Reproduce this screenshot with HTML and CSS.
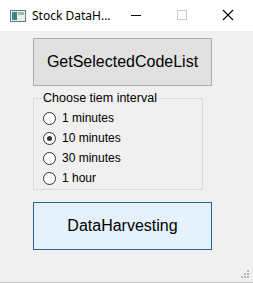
FILE: index.html
```html
<!DOCTYPE html>
<html lang="en">
<head>
    <meta charset="UTF-8">
    <title>Stock DataHarvester</title>
    <link rel="stylesheet" href="styles.css">
</head>
<body>
    <div class="window">
        <div class="titlebar">
            <svg class="app-icon" width="16" height="12" viewBox="0 0 16 12">
                <rect x="0.5" y="0.5" width="15" height="11" fill="#e8eeee" stroke="#5d8080"/>
                <rect x="2" y="2" width="5" height="8" fill="#3f8585"/>
                <rect x="8" y="2" width="6" height="3" fill="#9fb7b7"/>
            </svg>
            <span class="title">Stock DataH...</span>
            <div class="controls">
                <svg class="ctl" width="46" height="31" viewBox="0 0 46 31"><line x1="18" y1="15.5" x2="28" y2="15.5" stroke="#000"/></svg>
                <svg class="ctl" width="46" height="31" viewBox="0 0 46 31"><rect x="18.5" y="10.5" width="9" height="9" fill="none" stroke="#cccccc"/></svg>
                <svg class="ctl" width="46" height="31" viewBox="0 0 46 31"><path d="M18 10 L28 20 M28 10 L18 20" stroke="#000" stroke-width="1.1"/></svg>
            </div>
        </div>

        <div class="content">
            <button class="btn">GetSelectedCodeList</button>

            <fieldset class="group">
                <legend>Choose tiem interval</legend>
                <label class="option"><input type="radio" name="interval"> 1 minutes</label>
                <label class="option"><input type="radio" name="interval" checked> 10 minutes</label>
                <label class="option"><input type="radio" name="interval"> 30 minutes</label>
                <label class="option"><input type="radio" name="interval"> 1 hour</label>
            </fieldset>

            <button class="btn btn-focus">DataHarvesting</button>
        </div>

        <svg class="grip" width="8" height="8" viewBox="0 0 8 8">
            <rect x="6" y="0" width="2" height="2" fill="#b8b8b8"/>
            <rect x="3" y="3" width="2" height="2" fill="#b8b8b8"/>
            <rect x="6" y="3" width="2" height="2" fill="#b8b8b8"/>
            <rect x="0" y="6" width="2" height="2" fill="#b8b8b8"/>
            <rect x="3" y="6" width="2" height="2" fill="#b8b8b8"/>
            <rect x="6" y="6" width="2" height="2" fill="#b8b8b8"/>
        </svg>
    </div>
</body>
</html>
```

FILE: styles.css
```css
body {
    margin: 0;
    font-family: "Liberation Sans", Arial, sans-serif;
    background: #ffffff;
}
.window {
    position: relative;
    width: 253px;
    height: 282px;
    background: #f0f0f0;
    border-bottom: 1px solid #c4c4c4;
}
.titlebar {
    height: 31px;
    background: #ffffff;
    display: flex;
    align-items: center;
}
.app-icon {
    margin-left: 10px;
    margin-top: 1px;
}
.title {
    margin-left: 6px;
    font-family: "Noto Sans", sans-serif;
    font-size: 12px;
    color: #000;
}
.controls {
    margin-left: auto;
    display: flex;
    margin-right: 2px;
}
.ctl {
    display: block;
}
.content {
    display: flex;
    flex-direction: column;
    align-items: flex-start;
    padding-left: 33px;
}
.btn {
    width: 179px;
    height: 48px;
    margin-top: 7px;
    background: #e1e1e1;
    border: 1px solid #adadad;
    font-family: "Liberation Sans", Arial, sans-serif;
    font-size: 16px;
    color: #000;
    padding: 0;
}
.btn-focus {
    margin-top: 12px;
    background: #e5f1fb;
    border: 1px solid #1f6a9a;
}
.group {
    width: 170px;
    box-sizing: border-box;
    margin: 5px 0 0;
    padding: 3px 0 1px 8px;
    border: 1px solid #dcdcdc;
}
.group legend {
    padding: 0 1px;
    font-size: 12.5px;
    line-height: 14px;
    color: #000;
}
.option {
    display: flex;
    align-items: center;
    height: 20px;
    font-size: 12px;
    color: #000;
}
.option input {
    appearance: none;
    width: 13px;
    height: 13px;
    margin: 0 6px 0 1px;
    border: 1px solid #333;
    border-radius: 50%;
    background: #fff;
    display: grid;
    place-content: center;
}
.option input:checked::before {
    content: "";
    width: 5px;
    height: 5px;
    border-radius: 50%;
    background: #333;
}
.grip {
    position: absolute;
    right: 4px;
    bottom: 4px;
}
```
